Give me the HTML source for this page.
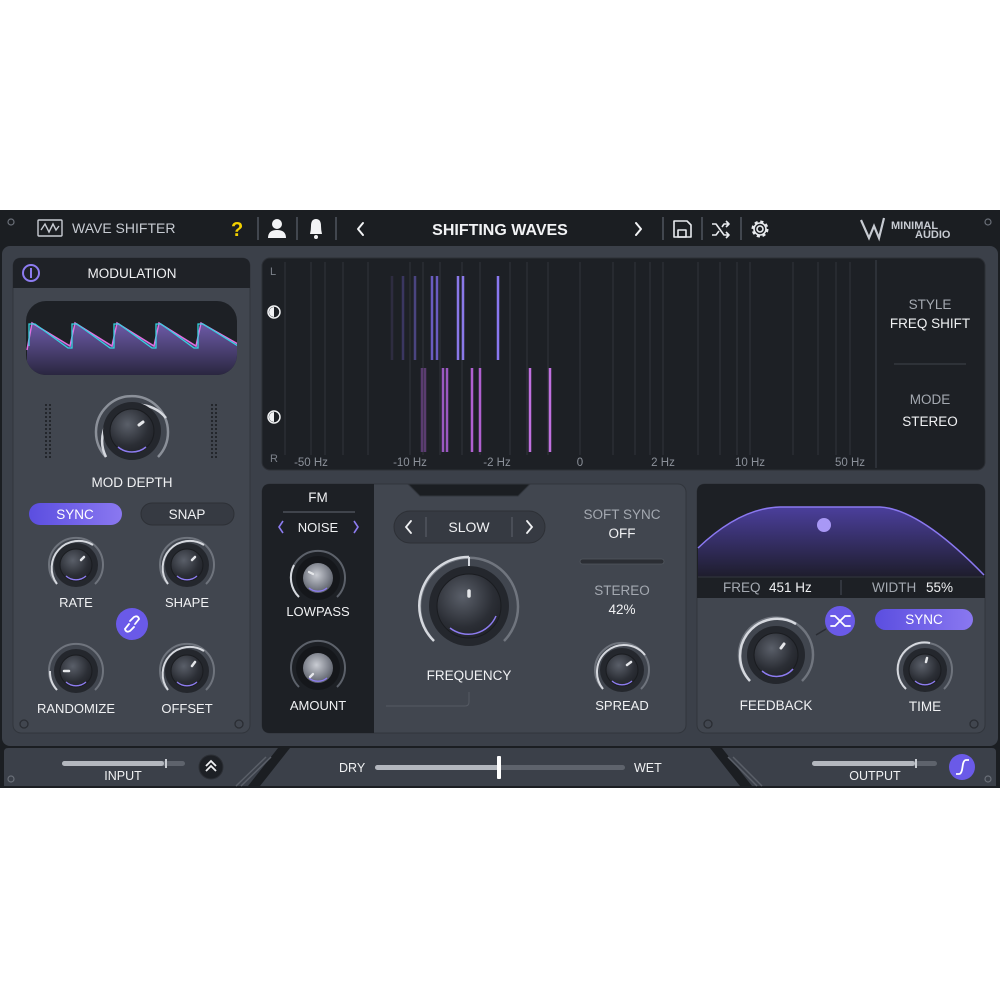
<!DOCTYPE html>
<html><head><meta charset="utf-8"><style>
html,body{margin:0;padding:0;background:#fff;width:1000px;height:1000px;overflow:hidden}
svg{display:block}
text{font-family:"Liberation Sans",sans-serif}
</style></head><body>
<svg width="1000" height="1000" viewBox="0 0 1000 1000" xmlns="http://www.w3.org/2000/svg">
<defs>
<radialGradient id="kn" cx="0.4" cy="0.35" r="0.8"><stop offset="0" stop-color="#5a5f69"/><stop offset="0.6" stop-color="#2b2e35"/><stop offset="1" stop-color="#1c1e23"/></radialGradient>
<radialGradient id="knl" cx="0.45" cy="0.4" r="0.7"><stop offset="0" stop-color="#c9ccd3"/><stop offset="0.6" stop-color="#7d818b"/><stop offset="1" stop-color="#4a4e57"/></radialGradient>
<linearGradient id="wv" x1="0" y1="0" x2="0" y2="1"><stop offset="0" stop-color="#6d5aa8"/><stop offset="1" stop-color="#2a2740"/></linearGradient>
<linearGradient id="flt" x1="0" y1="0" x2="0" y2="1"><stop offset="0" stop-color="#4b3f9c"/><stop offset="1" stop-color="#1e1d2c"/></linearGradient>
<linearGradient id="sy" x1="0" y1="0" x2="1" y2="0"><stop offset="0" stop-color="#5b4ee0"/><stop offset="1" stop-color="#8a78f0"/></linearGradient>
</defs>
<!-- body -->
<rect x="0" y="210" width="1000" height="578" fill="#1b1e22"/>
<rect x="2" y="246" width="996" height="500" rx="8" fill="#3b4049"/>
<circle cx="11" cy="222" r="3" fill="none" stroke="#6a6f78" stroke-width="1.2"/>
<circle cx="988" cy="222" r="3" fill="none" stroke="#6a6f78" stroke-width="1.2"/>
<!-- top bar -->
<g fill="none" stroke="#c7cbd2" stroke-width="1.4">
<rect x="38" y="220" width="24" height="16" rx="1"/>
<path d="M41 230 L45 224 L49 232 L53 224 L56 230 L59 226"/>
</g>
<text x="72" y="233" font-size="14" fill="#c7cbd2">WAVE SHIFTER</text>
<text x="231" y="236" font-size="20" font-weight="bold" fill="#f2d000">?</text>
<g stroke="#50555e" stroke-width="1.5"><line x1="258" y1="217" x2="258" y2="240"/><line x1="297" y1="217" x2="297" y2="240"/><line x1="336" y1="217" x2="336" y2="240"/><line x1="663" y1="217" x2="663" y2="240"/><line x1="702" y1="217" x2="702" y2="240"/><line x1="741" y1="217" x2="741" y2="240"/></g>
<g fill="#f2f3f5"><circle cx="277" cy="224" r="5"/><path d="M268 238 Q268 230 277 230 Q286 230 286 238 Z"/>
<path d="M310 234 Q311 230 311 226 Q311 219 316 219 Q321 219 321 226 Q321 230 322 234 Z"/><circle cx="316" cy="237" r="2"/></g>
<g fill="none" stroke="#f2f3f5" stroke-width="2" stroke-linecap="round" stroke-linejoin="round"><path d="M363 223 L358 229 L363 235"/><path d="M636 223 L641 229 L636 235"/></g>
<text x="500" y="235" font-size="16" font-weight="bold" fill="#f2f3f5" text-anchor="middle">SHIFTING WAVES</text>
<g fill="none" stroke="#e8eaee" stroke-width="1.6" stroke-linejoin="round">
<path d="M674 221 H687 L691 225 V237 H674 Z"/><rect x="678" y="230" width="8" height="7"/>
<path d="M712 224 H716 L724 235 H729 M712 235 H716 L719 231 M722 227 L724 224 H729 M726 221 L729 224 L726 227 M726 232 L729 235 L726 238"/>
<circle cx="760" cy="229" r="3"/><circle cx="760" cy="229" r="7" stroke-dasharray="3 2.5" stroke-width="3"/><circle cx="760" cy="229" r="6"/>
</g>
<path d="M861 220 L869 238 L874 226 L879 238 L884 218" fill="none" stroke="#c7cbd2" stroke-width="2.2"/>
<text x="891" y="229" font-size="11" font-weight="bold" fill="#c7cbd2">MINIMAL</text>
<text x="915" y="238" font-size="11" font-weight="bold" fill="#c7cbd2">AUDIO</text>
<!-- modulation panel -->
<rect x="13" y="258" width="237" height="475" rx="8" fill="#41464f" stroke="#31353c"/>
<path d="M13 288 V266 Q13 258 21 258 H242 Q250 258 250 266 V288 Z" fill="#1f2227"/>
<circle cx="31" cy="273" r="8" fill="none" stroke="#8d7cf0" stroke-width="2"/><line x1="31" y1="268" x2="31" y2="278" stroke="#8d7cf0" stroke-width="2"/>
<text x="132" y="278" font-size="13.5" fill="#f0f1f3" text-anchor="middle">MODULATION</text>
<rect x="26" y="301" width="211" height="74" rx="20" fill="#1d2025"/>
<clipPath id="wc"><rect x="26" y="301" width="211" height="74" rx="20"/></clipPath>
<g clip-path="url(#wc)">
<path d="M27 350 L32 323 L70 346 L75 323 L112 346 L117 323 L154 346 L159 323 L196 346 L201 323 L238 344 V375 H27 Z" fill="url(#wv)"/>
<path d="M27 350 L32 323 L70 346 L75 323 L112 346 L117 323 L154 346 L159 323 L196 346 L201 323 L238 344" fill="none" stroke="#e070e0" stroke-width="1.5"/>
<path d="M29 346 L29 324 L35 324 L68 348 L72 348 L72 324 L77 324 L110 348 L114 348 L114 324 L119 324 L152 348 L156 348 L156 324 L161 324 L194 348 L198 348 L198 324 L203 324 L238 346" fill="none" stroke="#35d3e0" stroke-width="1.3"/>
</g>
<g fill="#1f2227">
<rect x="45" y="403" width="2" height="58" opacity="0"/>
</g>
<g stroke="#23262b" stroke-width="2" stroke-dasharray="2 2"><line x1="46" y1="404" x2="46" y2="460"/><line x1="50" y1="404" x2="50" y2="460"/><line x1="212" y1="404" x2="212" y2="460"/><line x1="216" y1="404" x2="216" y2="460"/></g>
<!-- knobs -->
<g id="knobs">
<!-- MOD DEPTH -->
<path d="M106 457 A36 36 0 1 1 158 457" fill="none" stroke="#8b9099" stroke-width="2.5"/>
<path d="M106 457 A36 36 0 0 1 166 418" fill="none" stroke="#d5d8de" stroke-width="2.5"/>
<circle cx="132" cy="431" r="29" fill="#24272d"/><circle cx="132" cy="431" r="22" fill="url(#kn)" stroke="#1a1c20"/>
<path d="M118 447 A22 22 0 0 0 146 447" fill="none" stroke="#8d7cf0" stroke-width="1.5"/>
<line x1="139" y1="425" x2="143" y2="422" stroke="#e5e7ea" stroke-width="3" stroke-linecap="round"/>
</g>
<text x="132" y="487" font-size="13.5" fill="#f0f1f3" text-anchor="middle">MOD DEPTH</text>
<rect x="29" y="503" width="93" height="22" rx="11" fill="url(#sy)"/>
<text x="75" y="519" font-size="13.5" fill="#fff" text-anchor="middle">SYNC</text>
<rect x="141" y="503" width="93" height="22" rx="11" fill="#363a42" stroke="#2d3036"/>
<text x="187" y="519" font-size="13.5" fill="#f0f1f3" text-anchor="middle">SNAP</text>
<!-- small knob template usage -->
<g>
<path d="M57 584 A27 27 0 1 1 95 584" fill="none" stroke="#6f747d" stroke-width="2"/><path d="M57 584 A27 27 0 0 1 93 545" fill="none" stroke="#d5d8de" stroke-width="2"/>
<circle cx="76" cy="565" r="22" fill="#24272d"/><circle cx="76" cy="565" r="16" fill="url(#kn)" stroke="#1a1c20"/><path d="M66 576 A15 15 0 0 0 86 576" fill="none" stroke="#8d7cf0" stroke-width="1.3"/><line x1="81" y1="560" x2="84" y2="557" stroke="#e5e7ea" stroke-width="2.5" stroke-linecap="round"/>
</g>
<g>
<path d="M168 584 A27 27 0 1 1 206 584" fill="none" stroke="#6f747d" stroke-width="2"/><path d="M168 584 A27 27 0 0 1 204 545" fill="none" stroke="#d5d8de" stroke-width="2"/>
<circle cx="187" cy="565" r="22" fill="#24272d"/><circle cx="187" cy="565" r="16" fill="url(#kn)" stroke="#1a1c20"/><path d="M177 576 A15 15 0 0 0 197 576" fill="none" stroke="#8d7cf0" stroke-width="1.3"/><line x1="192" y1="560" x2="195" y2="557" stroke="#e5e7ea" stroke-width="2.5" stroke-linecap="round"/>
</g>
<g>
<path d="M57 690 A27 27 0 1 1 95 690" fill="none" stroke="#6f747d" stroke-width="2"/><path d="M57 690 A27 27 0 0 1 50 671" fill="none" stroke="#d5d8de" stroke-width="2"/>
<circle cx="76" cy="671" r="22" fill="#24272d"/><circle cx="76" cy="671" r="16" fill="url(#kn)" stroke="#1a1c20"/><path d="M66 682 A15 15 0 0 0 86 682" fill="none" stroke="#8d7cf0" stroke-width="1.3"/><line x1="64" y1="671" x2="69" y2="671" stroke="#e5e7ea" stroke-width="2.5" stroke-linecap="round"/>
</g>
<g>
<path d="M168 690 A27 27 0 1 1 206 690" fill="none" stroke="#6f747d" stroke-width="2"/><path d="M168 690 A27 27 0 0 1 204 651" fill="none" stroke="#d5d8de" stroke-width="2"/>
<circle cx="187" cy="671" r="22" fill="#24272d"/><circle cx="187" cy="671" r="16" fill="url(#kn)" stroke="#1a1c20"/><path d="M177 682 A15 15 0 0 0 197 682" fill="none" stroke="#8d7cf0" stroke-width="1.3"/><line x1="192" y1="666" x2="195" y2="662" stroke="#e5e7ea" stroke-width="2.5" stroke-linecap="round"/>
</g>
<g font-size="13" fill="#f0f1f3" text-anchor="middle"><text x="76" y="607">RATE</text><text x="187" y="607">SHAPE</text><text x="76" y="713">RANDOMIZE</text><text x="187" y="713">OFFSET</text></g>
<circle cx="132" cy="624" r="16" fill="#6a5ae8"/>
<g fill="none" stroke="#fff" stroke-width="1.8" stroke-linecap="round"><path d="M130 621 L134 617 Q138 615 139 619 L135 624"/><path d="M134 627 L130 631 Q126 633 125 629 L129 624"/></g>
<circle cx="24" cy="724" r="4" fill="none" stroke="#2a2d33" stroke-width="1.3"/><circle cx="239" cy="724" r="4" fill="none" stroke="#2a2d33" stroke-width="1.3"/>
<!-- visualizer -->
<rect x="262" y="258" width="723" height="212" rx="8" fill="#1d2025" stroke="#2c2f35"/>
<line x1="876" y1="260" x2="876" y2="468" stroke="#33373e" stroke-width="1.5"/>
<g stroke="#2e3238" stroke-width="1.2">
<line x1="285" y1="262" x2="285" y2="455"/><line x1="311" y1="262" x2="311" y2="455"/><line x1="325" y1="262" x2="325" y2="455"/><line x1="343" y1="262" x2="343" y2="455"/><line x1="368" y1="262" x2="368" y2="455"/><line x1="410" y1="262" x2="410" y2="455"/><line x1="423" y1="262" x2="423" y2="455"/><line x1="440" y1="262" x2="440" y2="455"/><line x1="462" y1="262" x2="462" y2="455"/><line x1="480" y1="262" x2="480" y2="455"/><line x1="510" y1="262" x2="510" y2="455"/><line x1="527" y1="262" x2="527" y2="455"/><line x1="548" y1="262" x2="548" y2="455"/><line x1="580" y1="262" x2="580" y2="455"/><line x1="613" y1="262" x2="613" y2="455"/><line x1="635" y1="262" x2="635" y2="455"/><line x1="650" y1="262" x2="650" y2="455"/><line x1="663" y1="262" x2="663" y2="455"/><line x1="698" y1="262" x2="698" y2="455"/><line x1="720" y1="262" x2="720" y2="455"/><line x1="737" y1="262" x2="737" y2="455"/><line x1="750" y1="262" x2="750" y2="455"/><line x1="793" y1="262" x2="793" y2="455"/><line x1="818" y1="262" x2="818" y2="455"/><line x1="836" y1="262" x2="836" y2="455"/><line x1="850" y1="262" x2="850" y2="455"/>
</g>
<g stroke-width="2.5">
<line x1="392" y1="276" x2="392" y2="360" stroke="#2e2c40"/><line x1="403" y1="276" x2="403" y2="360" stroke="#3a3660"/><line x1="415" y1="276" x2="415" y2="360" stroke="#4a4480"/><line x1="432" y1="276" x2="432" y2="360" stroke="#6a5cc0"/><line x1="437" y1="276" x2="437" y2="360" stroke="#6a5cc0"/><line x1="458" y1="276" x2="458" y2="360" stroke="#8a78e8"/><line x1="463" y1="276" x2="463" y2="360" stroke="#8a78e8"/><line x1="498" y1="276" x2="498" y2="360" stroke="#8a78f0"/>
<line x1="422" y1="368" x2="422" y2="452" stroke="#5a3c70"/><line x1="425" y1="368" x2="425" y2="452" stroke="#5a3c70"/><line x1="443" y1="368" x2="443" y2="452" stroke="#9a58c0"/><line x1="447" y1="368" x2="447" y2="452" stroke="#9a58c0"/><line x1="472" y1="368" x2="472" y2="452" stroke="#b060d0"/><line x1="480" y1="368" x2="480" y2="452" stroke="#b060d0"/><line x1="530" y1="368" x2="530" y2="452" stroke="#c070e0"/><line x1="550" y1="368" x2="550" y2="452" stroke="#c070e0"/>
</g>
<g font-size="11" fill="#7c818a"><text x="270" y="275">L</text><text x="270" y="462">R</text></g>
<g fill="none" stroke="#f0f1f3" stroke-width="1.5"><circle cx="274" cy="312" r="6"/><circle cx="274" cy="417" r="6"/></g>
<path d="M274 307 A5 5 0 0 0 274 317 Z" fill="#f0f1f3"/><path d="M274 412 A5 5 0 0 0 274 422 Z" fill="#f0f1f3"/>
<g font-size="11.5" fill="#8c919a" text-anchor="middle"><text x="311" y="466">-50 Hz</text><text x="410" y="466">-10 Hz</text><text x="497" y="466">-2 Hz</text><text x="580" y="466">0</text><text x="663" y="466">2 Hz</text><text x="750" y="466">10 Hz</text><text x="850" y="466">50 Hz</text></g>
<g text-anchor="middle" font-size="13.5"><text x="930" y="309" fill="#a4a9b1">STYLE</text><text x="930" y="328" fill="#f0f1f3">FREQ SHIFT</text><text x="930" y="404" fill="#a4a9b1">MODE</text><text x="930" y="426" fill="#f0f1f3">STEREO</text></g>
<line x1="894" y1="364" x2="966" y2="364" stroke="#3a3e45" stroke-width="1.2"/>
<!-- middle section -->
<rect x="262" y="484" width="424" height="249" rx="8" fill="#41464f" stroke="#31353c"/>
<path d="M270 484 H374 V733 H270 Q262 733 262 725 V492 Q262 484 270 484 Z" fill="#1d2025"/>
<path d="M408 484 L420 496 H518 L530 484 Z" fill="#1b1e22" stroke="#31353c"/>
<text x="318" y="502" font-size="13.5" fill="#f0f1f3" text-anchor="middle">FM</text>
<line x1="283" y1="512" x2="355" y2="512" stroke="#555a63" stroke-width="1.2"/>
<g fill="none" stroke="#8d7cf0" stroke-width="1.6"><path d="M283 521 L279 527 L283 533"/><path d="M354 521 L358 527 L354 533"/></g>
<text x="318" y="532" font-size="13" fill="#f0f1f3" text-anchor="middle">NOISE</text>
<g>
<path d="M299 597 A27 27 0 1 1 337 597" fill="none" stroke="#5c616a" stroke-width="2"/><path d="M299 597 A27 27 0 0 1 294 565" fill="none" stroke="#d5d8de" stroke-width="2"/>
<circle cx="318" cy="578" r="22" fill="#15171b"/><circle cx="318" cy="578" r="15" fill="url(#knl)"/><path d="M309 588 A14 14 0 0 0 327 588" fill="none" stroke="#8d7cf0" stroke-width="1.3"/><line x1="309" y1="572" x2="313" y2="574" stroke="#e5e7ea" stroke-width="2.3" stroke-linecap="round"/>
</g>
<g>
<path d="M299 687 A27 27 0 1 1 337 687" fill="none" stroke="#5c616a" stroke-width="2"/>
<circle cx="318" cy="668" r="22" fill="#15171b"/><circle cx="318" cy="668" r="15" fill="url(#knl)"/><path d="M309 678 A14 14 0 0 0 327 678" fill="none" stroke="#8d7cf0" stroke-width="1.3"/><line x1="310" y1="677" x2="313" y2="674" stroke="#e5e7ea" stroke-width="2.3" stroke-linecap="round"/>
</g>
<g font-size="13" fill="#f0f1f3" text-anchor="middle"><text x="318" y="616">LOWPASS</text><text x="318" y="710">AMOUNT</text></g>
<rect x="394" y="511" width="151" height="32" rx="16" fill="#363a42" stroke="#2d3036"/>
<g stroke="#555a63" stroke-width="1.3"><line x1="426" y1="517" x2="426" y2="537"/><line x1="512" y1="517" x2="512" y2="537"/></g>
<g fill="none" stroke="#f0f1f3" stroke-width="1.8" stroke-linecap="round"><path d="M411 521 L406 527 L411 533"/><path d="M527 521 L532 527 L527 533"/></g>
<text x="469" y="532" font-size="14" fill="#f0f1f3" text-anchor="middle">SLOW</text>
<g>
<path d="M434 641 A49 49 0 1 1 504 641" fill="none" stroke="#70757e" stroke-width="2.5"/><path d="M434 641 A49 49 0 0 1 469 557" fill="none" stroke="#d5d8de" stroke-width="2.5"/>
<line x1="469" y1="557" x2="469" y2="566" stroke="#d5d8de" stroke-width="2"/>
<circle cx="469" cy="606" r="40" fill="#24272d"/><circle cx="469" cy="606" r="32" fill="url(#kn)" stroke="#1a1c20"/><path d="M450 628 A30 30 0 0 0 496 616" fill="none" stroke="#8d7cf0" stroke-width="1.5"/><line x1="469" y1="591" x2="469" y2="596" stroke="#e5e7ea" stroke-width="3.5" stroke-linecap="round"/>
</g>
<text x="469" y="680" font-size="13.5" fill="#f0f1f3" text-anchor="middle">FREQUENCY</text>
<path d="M386 706 H465 Q469 706 469 702 V692" fill="none" stroke="#555a63" stroke-width="1"/>
<g text-anchor="middle" font-size="13.5"><text x="622" y="519" fill="#a4a9b1">SOFT SYNC</text><text x="622" y="538" fill="#f0f1f3">OFF</text><text x="622" y="595" fill="#a4a9b1">STEREO</text><text x="622" y="614" fill="#f0f1f3">42%</text></g>
<rect x="580" y="559" width="84" height="5" rx="2.5" fill="#2b2e34" stroke="#52575f" stroke-width="0.8"/>
<g>
<path d="M603 689 A27 27 0 1 1 641 689" fill="none" stroke="#6f747d" stroke-width="2"/><path d="M603 689 A27 27 0 0 1 645 655" fill="none" stroke="#d5d8de" stroke-width="2"/>
<circle cx="622" cy="670" r="22" fill="#24272d"/><circle cx="622" cy="670" r="16" fill="url(#kn)" stroke="#1a1c20"/><path d="M612 681 A15 15 0 0 0 632 681" fill="none" stroke="#8d7cf0" stroke-width="1.3"/><line x1="627" y1="665" x2="631" y2="662" stroke="#e5e7ea" stroke-width="2.5" stroke-linecap="round"/>
</g>
<text x="622" y="710" font-size="13" fill="#f0f1f3" text-anchor="middle">SPREAD</text>
<!-- right panel -->
<rect x="697" y="484" width="288" height="249" rx="8" fill="#41464f" stroke="#31353c"/>
<path d="M697 598 V492 Q697 484 705 484 H977 Q985 484 985 492 V598 Z" fill="#1d2025"/>
<path d="M698 548 Q740 508 780 507 H880 Q920 509 984 575 V577 H698 Z" fill="url(#flt)"/>
<path d="M698 548 Q740 508 780 507 H880 Q920 509 984 575" fill="none" stroke="#8a78f0" stroke-width="1.5"/>
<circle cx="824" cy="525" r="7" fill="#a898f5"/>
<line x1="698" y1="577" x2="984" y2="577" stroke="#33373e"/>
<line x1="841" y1="580" x2="841" y2="595" stroke="#41464f" stroke-width="1.2"/>
<g font-size="13.5"><text x="723" y="592" fill="#a4a9b1">FREQ</text><text x="769" y="592" fill="#f0f1f3">451 Hz</text><text x="872" y="592" fill="#a4a9b1">WIDTH</text><text x="926" y="592" fill="#f0f1f3">55%</text></g>
<g>
<path d="M750 681 A37 37 0 1 1 802 681" fill="none" stroke="#70757e" stroke-width="2.5"/><path d="M750 681 A37 37 0 0 1 796 624" fill="none" stroke="#d5d8de" stroke-width="2.5"/>
<circle cx="776" cy="655" r="29" fill="#24272d"/><circle cx="776" cy="655" r="22" fill="url(#kn)" stroke="#1a1c20"/><path d="M762 671 A22 22 0 0 0 793 669" fill="none" stroke="#8d7cf0" stroke-width="1.5"/><line x1="781" y1="648" x2="784" y2="644" stroke="#e5e7ea" stroke-width="3" stroke-linecap="round"/>
</g>
<line x1="816" y1="635" x2="826" y2="629" stroke="#2a2d33" stroke-width="1.5"/>
<circle cx="840" cy="621" r="15" fill="#6a5ae8"/>
<g fill="none" stroke="#fff" stroke-width="1.8" stroke-linecap="round"><path d="M831 616 H835 L845 626 H850 M831 626 H835 L845 616 H850"/></g>
<rect x="875" y="609" width="98" height="21" rx="10.5" fill="url(#sy)"/>
<text x="924" y="624" font-size="13.5" fill="#fff" text-anchor="middle">SYNC</text>
<g>
<path d="M906 689 A27 27 0 1 1 944 689" fill="none" stroke="#6f747d" stroke-width="2"/><path d="M906 689 A27 27 0 0 1 930 643" fill="none" stroke="#d5d8de" stroke-width="2"/>
<circle cx="925" cy="670" r="22" fill="#24272d"/><circle cx="925" cy="670" r="16" fill="url(#kn)" stroke="#1a1c20"/><path d="M915 681 A15 15 0 0 0 935 681" fill="none" stroke="#8d7cf0" stroke-width="1.3"/><line x1="926" y1="662" x2="927" y2="658" stroke="#e5e7ea" stroke-width="2.5" stroke-linecap="round"/>
</g>
<g font-size="13.5" fill="#f0f1f3" text-anchor="middle"><text x="776" y="710">FEEDBACK</text><text x="925" y="711">TIME</text></g>
<circle cx="708" cy="724" r="4" fill="none" stroke="#2a2d33" stroke-width="1.3"/><circle cx="974" cy="724" r="4" fill="none" stroke="#2a2d33" stroke-width="1.3"/>
<!-- bottom bar -->
<path d="M4 752 Q4 748 8 748 H278 L248 786 H4 Z" fill="#3b4049"/>
<path d="M290 748 H710 L740 786 H260 Z" fill="#3b4049"/>
<path d="M722 748 H992 Q996 748 996 752 V786 H752 Z" fill="#3b4049"/>
<g stroke="#5a5f68" stroke-width="1.5"><line x1="236" y1="786" x2="266" y2="757"/><line x1="241" y1="786" x2="271" y2="757"/><line x1="728" y1="757" x2="757" y2="786"/><line x1="733" y1="757" x2="762" y2="786"/></g>
<rect x="62" y="761" width="123" height="5" rx="2.5" fill="#5e636c"/><rect x="62" y="761" width="102" height="5" rx="2.5" fill="#b3b7be"/><rect x="165" y="759" width="2" height="9" fill="#c8ccd2"/>
<text x="123" y="780" font-size="12.5" fill="#f0f1f3" text-anchor="middle">INPUT</text>
<circle cx="211" cy="767" r="12" fill="#1d2025" stroke="#2c2f35"/>
<g fill="none" stroke="#f0f1f3" stroke-width="1.8"><path d="M206 766 L211 761 L216 766"/><path d="M206 771 L211 766 L216 771"/></g>
<text x="339" y="772" font-size="12.5" fill="#f0f1f3">DRY</text>
<rect x="375" y="765" width="250" height="5" rx="2.5" fill="#5e636c"/><rect x="375" y="765" width="124" height="5" rx="2.5" fill="#b3b7be"/>
<rect x="497" y="756" width="4" height="23" rx="1" fill="#fff"/>
<text x="634" y="772" font-size="12.5" fill="#f0f1f3">WET</text>
<rect x="812" y="761" width="125" height="5" rx="2.5" fill="#5e636c"/><rect x="812" y="761" width="103" height="5" rx="2.5" fill="#b3b7be"/><rect x="915" y="759" width="2" height="9" fill="#c8ccd2"/>
<text x="875" y="780" font-size="12.5" fill="#f0f1f3" text-anchor="middle">OUTPUT</text>
<circle cx="962" cy="767" r="13" fill="#6a5ae8"/>
<path d="M956 774 H959 Q961 774 962 770 L963 764 Q964 760 966 760 H969" fill="none" stroke="#fff" stroke-width="1.8"/>
<circle cx="11" cy="779" r="3" fill="none" stroke="#6a6f78" stroke-width="1.2"/><circle cx="988" cy="779" r="3" fill="none" stroke="#6a6f78" stroke-width="1.2"/>
</svg>
</body></html>
